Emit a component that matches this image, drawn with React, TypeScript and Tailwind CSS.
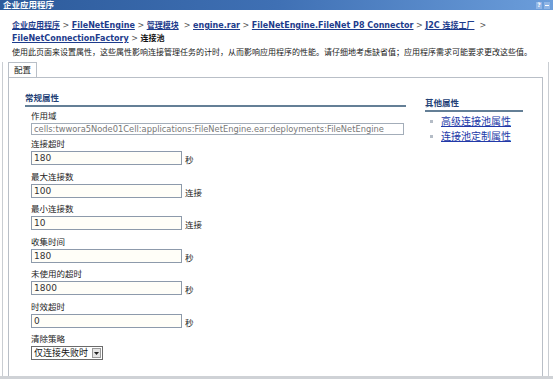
import React from 'react'

const crumbs: { text: string; link: boolean }[] = [
  { text: '企业应用程序', link: true },
  { text: ' > ', link: false },
  { text: 'FileNetEngine', link: true },
  { text: ' > ', link: false },
  { text: '管理模块', link: true },
  { text: '  > ', link: false },
  { text: 'engine.rar', link: true },
  { text: ' > ', link: false },
  { text: 'FileNetEngine.FileNet P8 Connector', link: true },
  { text: ' > ', link: false },
  { text: 'J2C 连接工厂', link: true },
  { text: '  > ', link: false },
]

const fields = [
  { label: '连接超时', value: '180', unit: '秒' },
  { label: '最大连接数', value: '100', unit: '连接' },
  { label: '最小连接数', value: '10', unit: '连接' },
  { label: '收集时间', value: '180', unit: '秒' },
  { label: '未使用的超时', value: '1800', unit: '秒' },
  { label: '时效超时', value: '0', unit: '秒' },
]

function Field({ label, value, unit }: { label: string; value: string; unit: string }) {
  return (
    <div className="flex flex-col">
      <div className="h-[13px] text-[8.5px] leading-[13px] text-[#222]">{label}</div>
      <div className="flex items-end">
        <input
          readOnly
          value={value}
          className="h-[14px] w-[151px] border border-[#8d9aab] bg-[#fffef8] px-[2px] text-[9px] leading-[12px] text-[#333] outline-none"
        />
        <span className="ml-[3px] text-[8.5px] leading-[10px] text-[#222]">{unit}</span>
      </div>
    </div>
  )
}

export default function App() {
  return (
    <div className="relative flex h-[379px] w-[553px] flex-col overflow-hidden bg-white font-['DejaVu_Sans','Noto_Sans_CJK_SC',sans-serif]">
      {/* title bar */}
      <div className="flex h-[10px] items-center justify-between bg-gradient-to-r from-[#2d5b9b] via-[#3f70b4] to-[#6c9edb] pl-[3px] pr-[3px]">
        <span className="text-[8.5px] font-bold leading-[10px] text-white">企业应用程序</span>
        <div className="flex items-center gap-[2px]">
          <span className="flex h-[7px] w-[6px] items-center justify-center bg-[#8fb5e6] text-[6px] font-bold leading-none text-white">?</span>
          <span className="flex h-[7px] w-[6px] items-center justify-center bg-[#8fb5e6]">
            <span className="h-[1px] w-[4px] bg-white" />
          </span>
        </div>
      </div>

      {/* breadcrumb + description */}
      <div className="pl-[12px] pt-[9px]">
        <div className="whitespace-pre text-[8px] leading-[13px]">
          {crumbs.map((c, i) =>
            c.link ? (
              <span key={i} className="font-bold text-[#1e3c8c] underline">
                {c.text}
              </span>
            ) : (
              <span key={i} className="text-[#555]">
                {c.text}
              </span>
            )
          )}
        </div>
        <div className="whitespace-pre text-[8px] leading-[13px]">
          <span className="font-bold text-[#1e3c8c] underline">FileNetConnectionFactory</span>
          <span className="text-[#555]"> &gt; </span>
          <span className="font-bold text-[#111]">连接池</span>
        </div>
        <div className="mt-[1px] text-[8px] leading-[13px] text-[#222]">
          使用此页面来设置属性，这些属性影响连接管理任务的计时，从而影响应用程序的性能。请仔细地考虑缺省值；应用程序需求可能要求更改这些值。
        </div>
      </div>

      {/* frame */}
      <div className="mx-[2px] mt-[3px] flex w-[547px] flex-1 flex-col border-x border-[#c9cdd2]">
        <div className="flex pl-[5px]">
          <div className="flex h-[16px] w-[29px] items-center justify-center border-x border-t border-[#b9bfc7] bg-white text-[8.5px] text-[#222]">
            配置
          </div>
        </div>
        <div className="mx-[5px] -mt-px flex flex-1 border-x border-t border-[#b9bfc7] pl-[16px]">
          {/* left column */}
          <div className="w-[381px] pt-[14px]">
            <div className="border-b-2 border-[#647f96] pb-[1px] text-[8.5px] font-bold leading-[12px] text-[#233f76]">
              常规属性
            </div>
            <div className="mt-[3px] flex flex-col pl-[6px]">
              <div className="h-[13px] text-[8.5px] leading-[13px] text-[#222]">作用域</div>
              <input
                readOnly
                value="cells:twwora5Node01Cell:applications:FileNetEngine.ear:deployments:FileNetEngine"
                className="h-[12px] w-[373px] border border-[#a3adb9] bg-white px-[2px] text-[8.3px] leading-[10px] text-[#777] outline-none"
              />
              <div className="mt-[3px] flex flex-col gap-[5.5px]">
                {fields.map(f => (
                  <Field key={f.label} {...f} />
                ))}
                <div className="flex flex-col">
                  <div className="h-[13px] text-[8.5px] leading-[13px] text-[#222]">清除策略</div>
                  <div className="flex h-[14px] w-[72px] items-center border border-[#6b6b6b] bg-white">
                    <span className="flex-1 pl-[2px] text-[9px] leading-[12px] text-[#111]">仅连接失败时</span>
                    <span className="mr-[1px] flex h-[10px] w-[9px] items-center justify-center border border-[#9a9a9a] bg-[#e4e4e4]">
                      <svg width="5" height="3" viewBox="0 0 5 3">
                        <path d="M0 0h5L2.5 3z" fill="#222" />
                      </svg>
                    </span>
                  </div>
                </div>
              </div>
            </div>
          </div>

          {/* right column */}
          <div className="ml-[19px] w-[98px] pt-[19px]">
            <div className="border-b-2 border-[#647f96] pb-[1px] text-[8.5px] font-bold leading-[12px] text-[#233f76]">
              其他属性
            </div>
            <ul className="mt-[2px] pl-[5px]">
              {['高级连接池属性', '连接池定制属性'].map(t => (
                <li key={t} className="flex h-[15px] items-center">
                  <span className="mr-[8px] h-[3px] w-[3px] bg-[#b4bcc6]" />
                  <span className="text-[10px] leading-[15px] text-[#2239a8] underline">{t}</span>
                </li>
              ))}
            </ul>
          </div>
        </div>
      </div>

      {/* bottom bar */}
      <div className="h-[3px] bg-[#cfd2d6]" />
    </div>
  )
}
